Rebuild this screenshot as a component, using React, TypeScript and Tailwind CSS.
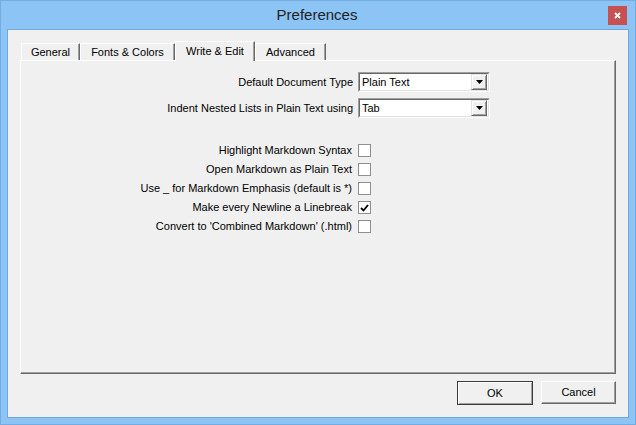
import React from 'react';

const font = { fontFamily: '"Liberation Sans", Arial, sans-serif' };

const tabs = [
  { label: 'General', w: 'w-[59px]' },
  { label: 'Fonts & Colors', w: 'w-[95px]' },
  { label: 'Write & Edit', w: 'w-[80px]', active: true },
  { label: 'Advanced', w: 'w-[71px]' },
];

const checks = [
  { label: 'Highlight Markdown Syntax', checked: false },
  { label: 'Open Markdown as Plain Text', checked: false },
  { label: 'Use _ for Markdown Emphasis (default is *)', checked: false },
  { label: 'Make every Newline a Linebreak', checked: true },
  { label: "Convert to 'Combined Markdown' (.html)", checked: false },
];

function Combo({ value }: { value: string }) {
  return (
    <div className="w-[132px] h-[20px] border border-t-[#a0a0a0] border-l-[#a0a0a0] border-b-white border-r-white">
      <div className="h-full flex items-center bg-white border border-t-[#696969] border-l-[#696969] border-b-[#e3e3e3] border-r-[#e3e3e3] pr-[1px]">
        <span className="flex-1 pl-[2px] text-[11px] leading-none text-black">{value}</span>
        <div className="w-[16px] h-[16px] bg-[#f0f0f0] border border-t-[#e3e3e3] border-l-[#e3e3e3] border-b-[#696969] border-r-[#696969] flex items-center justify-center shadow-[inset_1px_1px_0_#fff,inset_-1px_-1px_0_#a0a0a0]">
          <svg width="7" height="4" viewBox="0 0 7 4">
            <path d="M0 0h7L3.5 4z" fill="#000" />
          </svg>
        </div>
      </div>
    </div>
  );
}

function Checkbox({ checked }: { checked: boolean }) {
  return (
    <div className="w-[13px] h-[13px] bg-white border border-[#8e8f8f] flex items-center justify-center">
      {checked && (
        <svg width="9" height="8" viewBox="0 0 9 8">
          <path d="M1 4l2.5 2.5L8 1" stroke="#000" strokeWidth="1.8" fill="none" />
        </svg>
      )}
    </div>
  );
}

export default function App() {
  return (
    <div
      className="w-[636px] h-[425px] bg-[#8cc4f6] border border-[#74ace0] flex flex-col px-[6px] pb-[6px]"
      style={font}
    >
      {/* Title bar */}
      <div className="h-[28px] flex items-start">
        <div className="flex-1" />
        <div className="pt-[5px] text-[15px] leading-[18px] text-[#222]">Preferences</div>
        <div className="flex-1 flex justify-end pt-[5px] pr-[2px]">
          <div className="w-[19px] h-[19px] bg-[#c75050] flex items-center justify-center">
            <svg width="7" height="7" viewBox="0 0 7 7">
              <path d="M1 1l5 5M6 1L1 6" stroke="#fff" strokeWidth="1.8" />
            </svg>
          </div>
        </div>
      </div>

      {/* Client area */}
      <div className="flex-1 bg-[#f0f0f0] border border-[#70a8dc] flex flex-col px-[12px] pt-[11px] pb-[12px]">
        {/* Tabs */}
        <div className="flex items-end h-[19px] pl-[1px] relative z-10">
          {tabs.map((t) =>
            t.active ? (
              <div
                key={t.label}
                className={`${t.w} h-[20px] -mb-[1px] bg-[#f0f0f0] border-l border-t border-white border-r border-r-[#696969] shadow-[inset_-1px_0_0_#a0a0a0] flex items-center justify-center text-[11px] text-black`}
              >
                {t.label}
              </div>
            ) : (
              <div
                key={t.label}
                className={`${t.w} h-[17px] bg-[#f0f0f0] border-l border-t border-white border-r border-r-[#696969] shadow-[inset_-1px_0_0_#a0a0a0] flex items-center justify-center text-[11px] text-black pt-[1px]`}
              >
                {t.label}
              </div>
            ),
          )}
        </div>

        {/* Panel */}
        <div className="flex-1 border-l border-t border-white border-r border-b border-r-[#696969] border-b-[#696969] shadow-[inset_-1px_-1px_0_#a0a0a0] pt-[11px] text-[11px] text-black">
          <div className="flex items-center h-[20px]">
            <div className="w-[337px] text-right pr-[5px]">Default Document Type</div>
            <Combo value="Plain Text" />
          </div>
          <div className="flex items-center h-[20px] mt-[6px]">
            <div className="w-[337px] text-right pr-[5px]">Indent Nested Lists in Plain Text using</div>
            <Combo value="Tab" />
          </div>

          <div className="mt-[23px] flex flex-col">
            {checks.map((c) => (
              <div key={c.label} className="flex items-center h-[19px]">
                <div className="w-[337px] text-right pr-[6px]">{c.label}</div>
                <Checkbox checked={c.checked} />
              </div>
            ))}
          </div>
        </div>

        {/* Buttons */}
        <div className="flex justify-end gap-[8px] mt-[7px] h-[24px] text-[11px] text-black">
          <div className="w-[76px] h-[24px] border border-[#3c3c3c] bg-[#f0f0f0] shadow-[inset_1px_1px_0_#fff,inset_-1px_-1px_0_#a0a0a0] flex items-center justify-center">
            OK
          </div>
          <div className="w-[75px] h-[23px] border border-t-white border-l-white border-b-[#696969] border-r-[#696969] bg-[#f0f0f0] shadow-[inset_-1px_-1px_0_#a0a0a0] flex items-center justify-center">
            Cancel
          </div>
        </div>
      </div>
    </div>
  );
}
